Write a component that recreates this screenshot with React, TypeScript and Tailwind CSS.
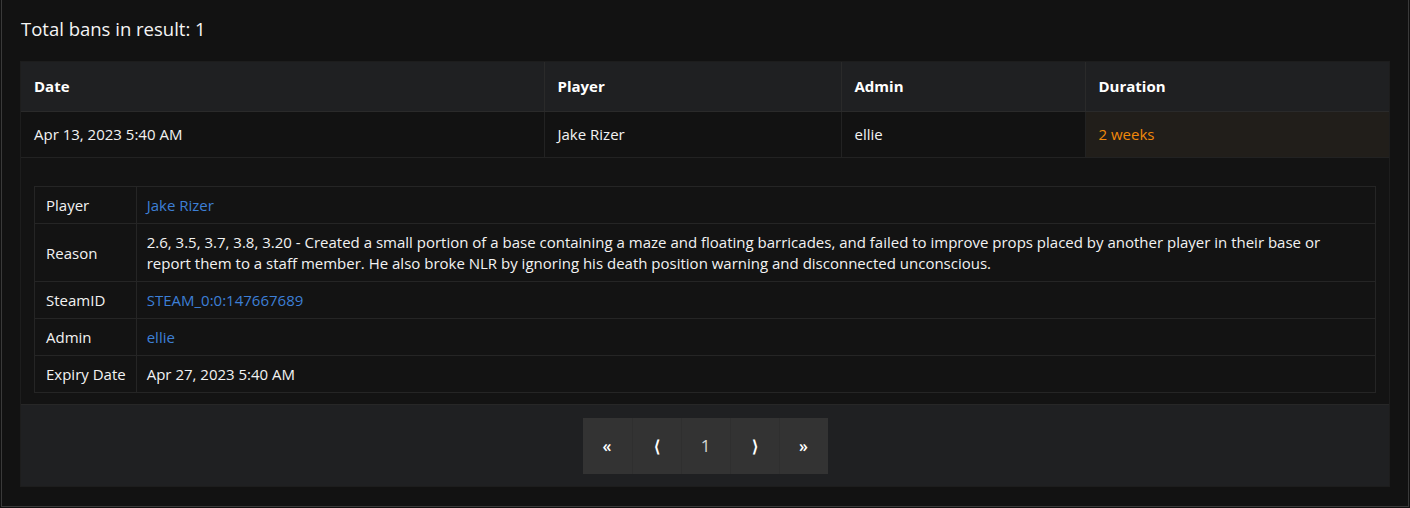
import React from 'react';

const font = { fontFamily: '"Open Sans", "Noto Sans", sans-serif' };

const details: { label: string; value: string; link?: boolean }[] = [
  { label: 'Player', value: 'Jake Rizer', link: true },
  {
    label: 'Reason',
    value:
      '2.6, 3.5, 3.7, 3.8, 3.20 - Created a small portion of a base containing a maze and floating barricades, and failed to improve props placed by another player in their base or report them to a staff member. He also broke NLR by ignoring his death position warning and disconnected unconscious.',
  },
  { label: 'SteamID', value: 'STEAM_0:0:147667689', link: true },
  { label: 'Admin', value: 'ellie', link: true },
  { label: 'Expiry Date', value: 'Apr 27, 2023 5:40 AM' },
];

export default function App() {
  return (
    <div className="min-h-[508px] bg-[#111111] px-[1px] text-[#f2f2f2]" style={font}>
      <div className="border-x border-b border-[#3a3a3a] bg-[#121212] px-[18px] pt-[15px] pb-[19px]">
        <h1 className="mb-[18px] pl-[1px] text-[18.5px] leading-[28px] text-[#f5f5f5]">
          Total bans in result: 1
        </h1>

        <div className="border border-[#1d1d1d]">
          <table className="w-full border-collapse text-[15px] leading-[21px]">
            <thead>
              <tr className="bg-[#1f2022] text-left font-bold text-white">
                <th className="w-[523px] border-b border-[#2a2a2a] px-[13px] py-[14px] font-bold">Date</th>
                <th className="w-[297px] border-b border-l border-[#2a2a2a] px-[13px] py-[14px] font-bold">Player</th>
                <th className="w-[244px] border-b border-l border-[#2a2a2a] px-[13px] py-[14px] font-bold">Admin</th>
                <th className="border-b border-l border-[#2a2a2a] px-[13px] py-[14px] font-bold">Duration</th>
              </tr>
            </thead>
            <tbody>
              <tr className="bg-[#121212]">
                <td className="border-b border-[#222222] px-[13px] py-3">Apr 13, 2023 5:40 AM</td>
                <td className="border-b border-l border-[#222222] px-[13px] py-3">Jake Rizer</td>
                <td className="border-b border-l border-[#222222] px-[13px] py-3">ellie</td>
                <td className="border-b border-l border-[#222222] bg-[#211e1a] px-[13px] py-3 text-[#f0880a]">
                  2 weeks
                </td>
              </tr>
              <tr className="bg-[#131313]">
                <td colSpan={4} className="px-[13px] pt-[28px] pb-[11px]">
                  <table className="w-full border-collapse border border-[#252525]">
                    <tbody>
                      {details.map((d) => (
                        <tr key={d.label}>
                          <td className="w-[101px] whitespace-nowrap border border-[#252525] pl-[11px] pr-[10px] pt-2 pb-[7px] align-middle">
                            {d.label}
                          </td>
                          <td
                            className={`border border-[#252525] px-[10px] pt-2 pb-[7px] ${
                              d.link ? 'text-[#3d7fd6]' : 'text-[#f2f2f2]'
                            }`}
                          >
                            {d.value}
                          </td>
                        </tr>
                      ))}
                    </tbody>
                  </table>
                </td>
              </tr>
            </tbody>
          </table>

          {/* Pagination */}
          <div className="flex justify-center border-t border-[#272727] bg-[#1f2022] pt-[13px] pb-[12px]">
            <div className="flex h-[56px] bg-[#333333]">
              {['«', '⟨', '1', '⟩', '»'].map((p, i) => (
                <button
                  key={i}
                  className={`flex h-full w-[49px] items-center justify-center ${
                    i > 0 ? 'border-l border-[#2f2f2f]' : ''
                  } ${p === '1' ? 'text-[17px] text-[#d6d6d6]' : 'text-[16px] font-semibold text-white'}`}
                >
                  {p}
                </button>
              ))}
            </div>
          </div>
        </div>
      </div>
    </div>
  );
}
